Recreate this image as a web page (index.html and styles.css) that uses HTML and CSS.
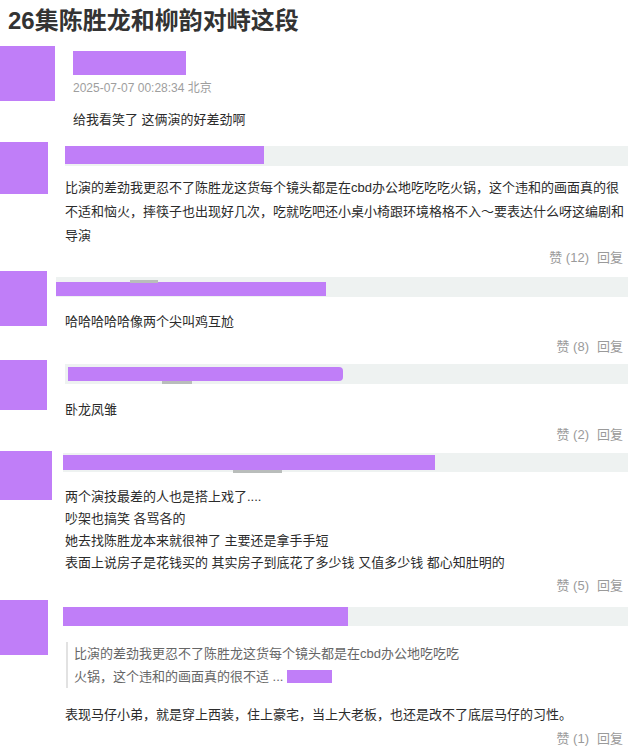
FILE: index.html
```html
<!DOCTYPE html>
<html>
    <head>
        <meta charset="utf-8">
        <meta name="viewport" content="width=device-width, initial-scale=1">
        <link rel="stylesheet" href="styles.css">
    </head>
    <body>
        <h1 class="title">26集陈胜龙和柳韵对峙这段</h1>

        <!-- Top comment -->
        <div class="comment first">
            <div class="avatar"></div>
            <div class="main">
                <div class="hidden name-box"></div>
                <div class="date">2025-07-07 00:28:34 北京</div>
                <div class="text">给我看笑了 这俩演的好差劲啊</div>
            </div>
        </div>

        <!-- Replies -->
        <div class="comment c2">
            <div class="avatar"></div>
            <div class="main">
                <div class="name-bar"><div class="hidden"></div></div>
                <div class="text">比演的差劲我更忍不了陈胜龙这货每个镜头都是在cbd办公地吃吃吃火锅，这个违和的画面真的很不适和恼火，摔筷子也出现好几次，吃就吃吧还小桌小椅跟环境格格不入～要表达什么呀这编剧和导演</div>
                <div class="actions"><span>赞 (12)</span><span>回复</span></div>
            </div>
        </div>

        <div class="comment c3">
            <div class="avatar"></div>
            <div class="main">
                <div class="name-bar"><div class="hidden"></div><div class="smudge"></div></div>
                <div class="text">哈哈哈哈哈像两个尖叫鸡互尬</div>
                <div class="actions"><span>赞 (8)</span><span>回复</span></div>
            </div>
        </div>

        <div class="comment c4">
            <div class="avatar"></div>
            <div class="main">
                <div class="name-bar"><div class="hidden"></div><div class="smudge"></div></div>
                <div class="text">卧龙凤雏</div>
                <div class="actions"><span>赞 (2)</span><span>回复</span></div>
            </div>
        </div>

        <div class="comment c5">
            <div class="avatar"></div>
            <div class="main">
                <div class="name-bar"><div class="hidden"></div><div class="smudge"></div></div>
                <div class="text">两个演技最差的人也是搭上戏了....<br>吵架也搞笑 各骂各的<br>她去找陈胜龙本来就很神了 主要还是拿手手短<br>表面上说房子是花钱买的 其实房子到底花了多少钱 又值多少钱 都心知肚明的</div>
                <div class="actions"><span>赞 (5)</span><span>回复</span></div>
            </div>
        </div>

        <div class="comment c6">
            <div class="avatar"></div>
            <div class="main">
                <div class="name-bar"><div class="hidden"></div></div>
                <div class="quote">比演的差劲我更忍不了陈胜龙这货每个镜头都是在cbd办公地吃吃吃火锅，这个违和的画面真的很不适 ... <span class="hidden inline"></span></div>
                <div class="text">表现马仔小弟，就是穿上西装，住上豪宅，当上大老板，也还是改不了底层马仔的习性。</div>
                <div class="actions"><span>赞 (1)</span><span>回复</span></div>
            </div>
        </div>
    </body>
</html>
```

FILE: styles.css
```css
body {
  margin: 0;
  background: #fff;
  color: #2b2b2b;
  font-family: "Liberation Sans", "Noto Sans CJK SC", sans-serif;
  font-size: 13px;
}

.title {
  margin: 0;
  padding: 8px 0 0 8px;
  font-size: 24px;
  line-height: 26px;
  font-weight: bold;
  color: #333;
}

/* comment row */
.comment {
  display: flex;
  align-items: flex-start;
}

.avatar {
  flex: none;
  background-color: #c07ef8;
}

.main {
  flex: 1;
  margin-right: 12px;
}

.hidden {
  background-color: #c07ef8;
}

.name-bar {
  position: relative;
  background-color: #eef2f1;
  height: 20px;
}

.name-bar .hidden {
  height: 18px;
}

.smudge {
  position: absolute;
  height: 3px;
  background-color: #b9bdbb;
}

.text {
  line-height: 24px;
}

.actions {
  display: flex;
  justify-content: flex-end;
  gap: 8px;
  padding-right: 5px;
  font-size: 13px;
  line-height: 20px;
  color: #9a9a9a;
}

/* first comment */
.first {
  margin-top: 12px;
}
.first .avatar {
  width: 55px;
  height: 55px;
}
.first .main {
  margin-left: 18px;
}
.name-box {
  margin-top: 5px;
  width: 113px;
  height: 24px;
}
.date {
  margin-top: 5px;
  font-size: 12px;
  line-height: 16px;
  color: #9e9e9e;
}
.first .text {
  margin-top: 14px;
  line-height: 20px;
}

/* reply 2 */
.c2 {
  margin-top: 12px;
}
.c2 .avatar {
  width: 48px;
  height: 52px;
}
.c2 .main {
  margin-left: 17px;
}
.c2 .name-bar {
  margin-top: 4px;
}
.c2 .hidden {
  width: 199px;
}
.c2 .text {
  margin-top: 10px;
}

/* reply 3 */
.c3 {
  margin-top: 3px;
}
.c3 .avatar {
  width: 47px;
  height: 55px;
}
.c3 .main {
  margin-left: 18px;
}
.c3 .name-bar {
  margin: 6px 0 0 -9px;
  padding-top: 5px;
  height: 15px;
}
.c3 .name-bar .hidden {
  width: 270px;
  height: 14px;
}
.c3 .smudge {
  top: 3px;
  left: 74px;
  width: 28px;
}
.c3 .text {
  margin-top: 13px;
}
.c3 .actions {
  margin-top: 3px;
}

/* reply 4 */
.c4 {
  margin-top: 3px;
}
.c4 .avatar {
  width: 47px;
  height: 50px;
}
.c4 .main {
  margin-left: 18px;
}
.c4 .name-bar {
  margin-top: 4px;
  padding: 3px 0 0 3px;
  height: 17px;
}
.c4 .name-bar .hidden {
  width: 275px;
  height: 14px;
  border-radius: 0 4px 4px 0;
}
.c4 .smudge {
  top: 17px;
  left: 97px;
  width: 30px;
}
.c4 .text {
  margin-top: 14px;
}
.c4 .actions {
  margin-top: 3px;
}

/* reply 5 */
.c5 {
  margin-top: 6px;
}
.c5 .avatar {
  width: 52px;
  height: 49px;
}
.c5 .main {
  margin-left: 13px;
}
.c5 .name-bar {
  margin: 2px 0 0 -2px;
  padding-top: 2px;
  height: 17px;
}
.c5 .name-bar .hidden {
  width: 372px;
  height: 15px;
}
.c5 .smudge {
  top: 17px;
  left: 170px;
  width: 49px;
}
.c5 .text {
  margin-top: 14px;
  line-height: 22px;
}
.c5 .actions {
  margin-top: 2px;
}

/* reply 6 */
.c6 {
  margin-top: 4px;
}
.c6 .avatar {
  width: 48px;
  height: 55px;
}
.c6 .main {
  margin-left: 17px;
}
.c6 .name-bar {
  margin: 7px 0 0 -2px;
  height: 19px;
}
.c6 .name-bar .hidden {
  width: 285px;
  height: 19px;
}
.quote {
  margin: 16px 0 0 1px;
  padding-left: 6px;
  width: 390px;
  border-left: 2px solid #e2e2e2;
  line-height: 23px;
  color: #666;
}
.hidden.inline {
  display: inline-block;
  width: 45px;
  height: 13px;
  vertical-align: -2px;
}
.c6 .text {
  margin-top: 17px;
  line-height: 20px;
}
.c6 .actions {
  margin-top: 4px;
}
```
